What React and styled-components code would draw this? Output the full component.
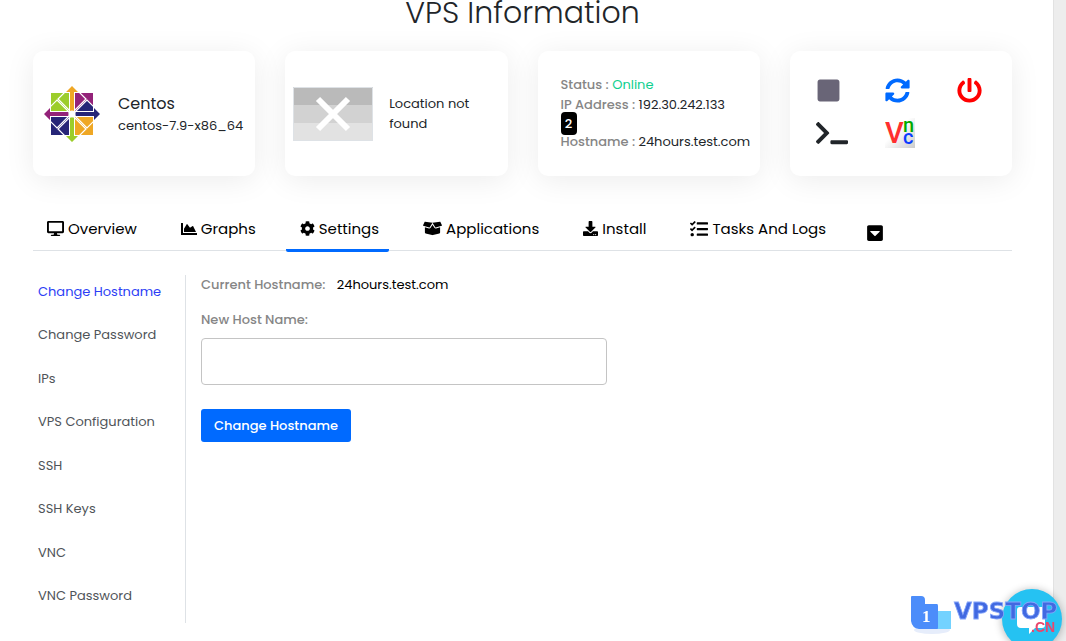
import styled, { createGlobalStyle } from "styled-components";
import {
  FaBoxOpen,
  FaCaretSquareDown,
  FaChartArea,
  FaCog,
  FaDesktop,
  FaDownload,
  FaPowerOff,
  FaStop,
  FaSyncAlt,
  FaTasks,
  FaTerminal,
} from "react-icons/fa";

const tabs = [
  { label: "Overview", Icon: FaDesktop, size: 17 },
  { label: "Graphs", Icon: FaChartArea, size: 16 },
  { label: "Settings", Icon: FaCog, size: 15, active: true },
  { label: "Applications", Icon: FaBoxOpen, size: 19 },
  { label: "Install", Icon: FaDownload, size: 15 },
  { label: "Tasks And Logs", Icon: FaTasks, size: 18 },
];

const settings = [
  "Change Hostname",
  "Change Password",
  "IPs",
  "VPS Configuration",
  "SSH",
  "SSH Keys",
  "VNC",
  "VNC Password",
];

function CentosLogo() {
  return (
    <svg width="56" height="56" viewBox="0 0 56 56" aria-label="CentOS">
      <path d="M7 7h20v20H7z" fill="#9ccd2a" />
      <path d="M29 7h20v20H29z" fill="#932279" />
      <path d="M7 29h20v20H7z" fill="#262577" />
      <path d="M29 29h20v20H29z" fill="#efa724" />
      <path d="M29 28L43 14l6 6v8z" fill="#262577" />
      <g fill="none" stroke="#fff" strokeWidth="1.2">
        <path d="M28 -1L14 13l14 14 14-14z" />
        <path d="M28 57L14 43l14-14 14 14z" />
        <path d="M-1 28l14-14 14 14-14 14z" />
        <path d="M57 28L43 14 29 28l14 14z" />
        <path d="M28 7v42M7 28h42" strokeWidth="6" />
      </g>
      <path d="M28 0l6 6h-4v19l-2 2-2-2V6h-4z" fill="#efa724" />
      <path d="M56 28l-6 6v-4H32l-2-2 2-2h18v-4z" fill="#262577" />
      <path d="M28 56l-6-6h4V32l2-2 2 2v18h4z" fill="#9ccd2a" />
      <path d="M0 28l6-6v4h18l2 2-2 2H6v4z" fill="#932279" />
      <circle cx="28" cy="28" r="3.6" fill="#fff" />
    </svg>
  );
}

function MissingFlag() {
  return (
    <svg width="80" height="54" viewBox="0 0 80 54" aria-label="No location">
      <path d="M0 0h80v18H0z" fill="#bababa" />
      <path d="M0 18h80v18H0z" fill="#d2d2d2" />
      <path d="M0 36h80v18H0z" fill="#e2e2e2" />
      <path d="M.5 .5h79v53H.5z" fill="none" stroke="#dee2e6" />
      <path d="M25 12l30 30M55 12L25 42" stroke="#fff" strokeWidth="6" />
    </svg>
  );
}

function VncLogo() {
  return (
    <svg width="30" height="30" viewBox="0 0 30 30">
      <defs>
        <linearGradient id="vnc" x1="0" y1="0" x2="1" y2="1">
          <stop offset="0.4" stopColor="#fff" />
          <stop offset="1" stopColor="#ccc" />
        </linearGradient>
      </defs>
      <path d="M0 0h30v30H0z" fill="url(#vnc)" />
      <g fontFamily="Roboto, sans-serif" fontWeight="500">
        <text x="0" y="25" fontSize="29" fill="#ff2f2f">
          V
        </text>
        <text x="18" y="14" fontSize="20" fill="#0a0">
          n
        </text>
        <text x="18" y="26" fontSize="20" fill="#0a3cff">
          c
        </text>
      </g>
    </svg>
  );
}

function VpstopLogo() {
  return (
    <svg width="152" height="42" viewBox="0 0 152 42" aria-label="VPSTOP.CN">
      <ellipse cx="22" cy="35" rx="18" ry="4" fill="#e6edfb" />
      <path d="M26 16h15v18H26z" fill="#73d2ff" />
      <path
        d="M2 1h9q4 0 4 4v4h12q1 0 1 2v22q0 1-1 1H9q-7-1-8-8V2q0-1 1-1z"
        fill="#4c8dfa"
      />
      <text
        x="12"
        y="27"
        fill="#fff"
        fontFamily="'Liberation Serif', serif"
        fontWeight="700"
        fontSize="17"
      >
        1
      </text>
      <text
        x="44"
        y="24"
        fill="#4169e1"
        stroke="#86a6fa"
        strokeWidth="0.8"
        fontFamily="'DejaVu Sans', sans-serif"
        fontWeight="700"
        fontSize="23"
      >
        VPSTOP
      </text>
      <text
        x="121"
        y="37"
        fill="#e8476d"
        fontFamily="'Liberation Sans', sans-serif"
        fontWeight="700"
        fontSize="14"
      >
        .CN
      </text>
    </svg>
  );
}

function ChatIcon() {
  return (
    <svg width="60" height="60" viewBox="0 0 60 60">
      <path
        d="M18 18h22q3 0 3 3v15q0 3-3 3h-7l-6 6v-6h-8q-4 0-4-4V21q0-3 3-3z"
        fill="#fff"
      />
    </svg>
  );
}

function App() {
  return (
    <Page>
      <GlobalStyle />
      <Content>
        <Title>VPS Information</Title>

        <Cards>
          <Card $left={11} $gap={18}>
            <CentosLogo />
            <div>
              <OsName>Centos</OsName>
              <OsVersion>centos-7.9-x86_64</OsVersion>
            </div>
          </Card>

          <Card $left={8} $gap={16}>
            <MissingFlag />
            <Location>Location not found</Location>
          </Card>

          <Card $left={23}>
            <div>
              <Info>
                Status : <Online>Online</Online>
              </Info>
              <Info>
                IP Address : <b>192.30.242.133</b>
              </Info>
              <BadgeRow>
                <Badge>2</Badge>
              </BadgeRow>
              <Info>
                Hostname : <b>24hours.test.com</b>
              </Info>
            </div>
          </Card>

          <Card $left={26}>
            <Actions>
              <Action $color="#696577" aria-label="Stop">
                <FaStop size={25} />
              </Action>
              <Action $color="#006aff" aria-label="Restart">
                <FaSyncAlt size={25} />
              </Action>
              <Action $color="#f00" aria-label="Power off">
                <FaPowerOff size={25} />
              </Action>
              <Action $color="#212529" aria-label="Terminal">
                <FaTerminal size={32} />
              </Action>
              <Action aria-label="VNC">
                <VncLogo />
              </Action>
            </Actions>
          </Card>
        </Cards>

        <TabBar>
          {tabs.map(({ label, Icon, active, size }) => (
            <Tab key={label} href="#" $active={active}>
              <Icon size={size} />
              {label}
            </Tab>
          ))}
          <MoreButton aria-label="More">
            <FaCaretSquareDown size={18} />
          </MoreButton>
        </TabBar>

        <Panel>
          <SideMenu>
            {settings.map((item, i) => (
              <li key={item}>
                <SideLink href="#" $active={i === 0}>
                  {item}
                </SideLink>
              </li>
            ))}
          </SideMenu>

          <Form onSubmit={(e) => e.preventDefault()}>
            <Current>
              Current Hostname: <b>24hours.test.com</b>
            </Current>
            <Label htmlFor="hostname">New Host Name:</Label>
            <Input id="hostname" type="text" />
            <Submit type="submit">Change Hostname</Submit>
          </Form>
        </Panel>
      </Content>
      <Gutter />

      <ChatButton aria-label="Chat">
        <ChatIcon />
      </ChatButton>
      <Watermark>
        <VpstopLogo />
      </Watermark>
    </Page>
  );
}

export default App;

const GlobalStyle = createGlobalStyle`
  * {
    box-sizing: border-box;
  }

  body {
    margin: 0;
    background: #fff;
    color: #212529;
    font-family: Poppins, Inter, sans-serif;
    font-size: 13px;
    line-height: 20px;
  }

  button, input {
    font: inherit;
  }
`;

const Page = styled.div`
  display: grid;
  grid-template-columns: 1fr 13px;
  min-height: 100vh;
`;

const Gutter = styled.div`
  background: #ededed;
  border-left: 1px solid #e2e2e2;
`;

const Content = styled.main`
  padding: 0 41px 18px 33px;
`;

const Title = styled.h1`
  margin: 0 0 25px;
  font-size: 30px;
  font-weight: 300;
  line-height: 26px;
  text-align: center;
`;

const Cards = styled.div`
  display: grid;
  grid-template-columns: repeat(4, minmax(0, 1fr));
  gap: 30px;
`;

const Card = styled.section`
  display: flex;
  align-items: center;
  gap: ${(props) => props.$gap || 0}px;
  min-height: 125px;
  padding-left: ${(props) => props.$left}px;
  border-radius: 10px;
  background: #fff;
  box-shadow: 0 4px 30px rgba(0, 0, 0, 0.08);

  > svg {
    flex: none;
  }
`;

const OsName = styled.div`
  font-size: 16px;
  line-height: 24px;
`;

const OsVersion = styled.div`
  white-space: nowrap;
`;

const Location = styled.div`
  max-width: 100px;
`;

const Info = styled.div`
  color: #868686;
  font-weight: 500;
  white-space: nowrap;

  > b {
    color: #212529;
    font-weight: 400;
  }
`;

const Online = styled.span`
  color: #0fd08f;
  font-weight: 400;
`;

const BadgeRow = styled.div`
  display: flex;
  align-items: center;
  height: 17px;
`;

const Badge = styled.span`
  flex: none;
  width: 16px;
  border-radius: 4px;
  background: #000;
  color: #fff;
  font-weight: 500;
  line-height: 23px;
  text-align: center;
`;

const Actions = styled.div`
  display: grid;
  grid-template-columns: 69px 72px auto;
  grid-auto-rows: 42px;
  align-items: center;
  padding-bottom: 4px;
`;

const Action = styled.button`
  display: flex;
  padding: 0;
  border: 0;
  background: none;
  color: ${(props) => props.$color};
  cursor: pointer;
`;

const TabBar = styled.nav`
  display: flex;
  gap: 20px;
  height: 43px;
  margin-top: 32px;
  border-bottom: 1px solid #dee2e6;
`;

const Tab = styled.a`
  display: flex;
  align-items: center;
  gap: 4px;
  height: 44px;
  padding: 0 10px 0 14px;
  border-bottom: 3px solid
    ${(props) => (props.$active ? "#006aff" : "transparent")};
  border-radius: 2px;
  color: #000;
  font-size: 15px;
  text-decoration: none;
  white-space: nowrap;
`;

const MoreButton = styled.button`
  display: flex;
  padding: 16px 10px 0;
  border: 0;
  background: none;
  color: #000;
  cursor: pointer;
`;

const Panel = styled.div`
  display: grid;
  grid-template-columns: 153px 1fr;
  margin-top: 24px;
`;

const SideMenu = styled.ul`
  display: flex;
  flex-direction: column;
  justify-content: space-between;
  min-height: 348px;
  margin: 0;
  padding: 7px 5px 17px;
  border-right: 1px solid #dee2e6;
  list-style: none;
`;

const SideLink = styled.a`
  display: block;
  color: ${(props) => (props.$active ? "#2c3ef5" : "#4f5459")};
  text-decoration: none;
  white-space: nowrap;
`;

const Form = styled.form`
  display: flex;
  flex-direction: column;
  align-items: flex-start;
  padding-left: 15px;
`;

const Current = styled.div`
  color: #868686;
  font-weight: 500;

  > b {
    margin-left: 8px;
    color: #000;
    font-weight: 400;
  }
`;

const Label = styled.label`
  margin: 15px 0 8px;
  color: #868686;
  font-weight: 500;
`;

const Input = styled.input`
  width: 50%;
  height: 47px;
  padding: 0 12px;
  border: 1px solid #c4c4c4;
  border-radius: 4px;
  background: #fff;
`;

const Submit = styled.button`
  height: 33px;
  margin-top: 24px;
  padding: 0 13px;
  border: 0;
  border-radius: 3px;
  background: #006aff;
  color: #fff;
  font-weight: 500;
  cursor: pointer;
`;

const ChatButton = styled.button`
  position: fixed;
  right: 4px;
  bottom: -8px;
  width: 60px;
  height: 60px;
  padding: 0;
  border: 0;
  border-radius: 50%;
  background: #25c2f2;
  box-shadow: 0 1px 8px rgba(0, 0, 0, 0.3);
`;

const Watermark = styled.div`
  position: fixed;
  right: 4px;
  bottom: 4px;
  height: 42px;
  pointer-events: none;
`;
